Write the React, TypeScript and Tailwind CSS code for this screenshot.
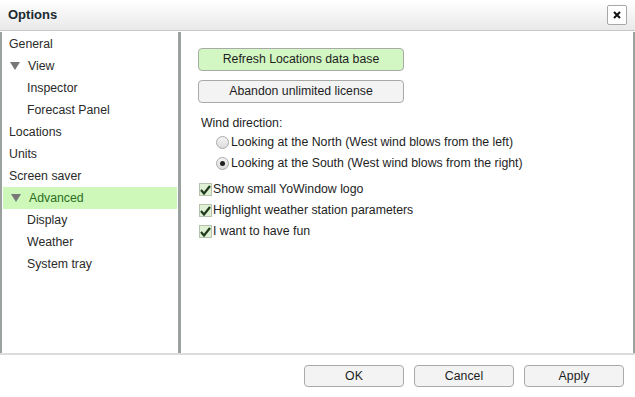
import { useState } from "react";

type Node = { label: string; depth: 0 | 1; arrow?: boolean };

const TREE: Node[] = [
  { label: "General", depth: 0 },
  { label: "View", depth: 0, arrow: true },
  { label: "Inspector", depth: 1 },
  { label: "Forecast Panel", depth: 1 },
  { label: "Locations", depth: 0 },
  { label: "Units", depth: 0 },
  { label: "Screen saver", depth: 0 },
  { label: "Advanced", depth: 0, arrow: true },
  { label: "Display", depth: 1 },
  { label: "Weather", depth: 1 },
  { label: "System tray", depth: 1 },
];

export default function App() {
  const [selected, setSelected] = useState("Advanced");
  const [south, setSouth] = useState(true);
  const [checks, setChecks] = useState([true, true, true]);

  const checkLabels = ["Show small YoWindow logo", "Highlight weather station parameters", "I want to have fun"];

  return (
    <div
      className="flex h-[397px] w-[635px] flex-col bg-white text-[12.3px] text-[#1e1e1e]"
      style={{ fontFamily: '"Liberation Sans", Arial, sans-serif' }}
    >
      <div className="flex h-[31px] shrink-0 items-center justify-between border-b border-[#c8c8c8] bg-gradient-to-b from-white to-[#e9e9e9] pl-2 pr-[8px]">
        <span className="text-[13px] font-bold text-[#1a2a30]">Options</span>
        <button className="flex h-[20px] w-[20px] items-center justify-center rounded-[2px] border border-[#a8a8a8] bg-white">
          <svg width="8" height="8" viewBox="0 0 8 8">
            <path d="M1 1L7 7M7 1L1 7" stroke="#111" strokeWidth="2" />
          </svg>
        </button>
      </div>

      <div className="flex h-[324px] shrink-0 border-b-2 border-[#dcdcdc] pt-[1px]">
        <div className="w-[181px] shrink-0 border-l-2 border-r-[3px] border-[#9aa19e] pt-[1px]">
          {TREE.map((n) => {
            const active = selected === n.label;
            return (
              <div
                key={n.label}
                onClick={() => setSelected(n.label)}
                className={[
                  "flex h-[22px] cursor-default items-center",
                  active ? "mx-[1px] bg-[#cdf8b9] text-[#2c6e1e]" : "text-[#2a2a2a]",
                  n.depth === 1 ? "pl-[25px]" : n.arrow ? "pl-[8px]" : "pl-[7px]",
                ].join(" ")}
              >
                {n.arrow ? (
                  <svg width="10" height="8" viewBox="0 0 10 8" className="mr-[8px]">
                    <path d="M0 0H10L5 8Z" fill="#777" />
                  </svg>
                ) : null}
                {n.label}
              </div>
            );
          })}
        </div>

        <div className="flex-1 border-r-2 border-[#9aa19e] pl-[17px] pt-[16px]">
          <button className="block h-[23px] w-[206px] rounded-[4px] border border-[#a8aaa8] bg-[#d3f7c3] text-[12.3px]">
            Refresh Locations data base
          </button>
          <button className="mt-[9px] block h-[23px] w-[206px] rounded-[4px] border border-[#a8aaa8] bg-[#f3f3f3] text-[12.3px]">
            Abandon unlimited license
          </button>

          <div className="mt-[11px] h-[18px] pl-[3px] leading-[18px]">Wind direction:</div>
          {[false, true].map((isSouth) => (
            <label key={String(isSouth)} className="flex h-[21px] items-center pl-[18px]" onClick={() => setSouth(isSouth)}>
              <span className="mr-[2px] flex h-[13px] w-[13px] items-center justify-center rounded-full border border-[#a9a9a9] bg-gradient-to-b from-[#f4f4f4] to-[#dcdcdc]">
                {south === isSouth ? <span className="h-[5px] w-[5px] rounded-full bg-[#222]" /> : null}
              </span>
              {isSouth
                ? "Looking at the South (West wind blows from the right)"
                : "Looking at the North (West wind blows from the left)"}
            </label>
          ))}

          <div className="mt-[5px]">
            {checkLabels.map((label, i) => (
              <label
                key={label}
                className="flex h-[21px] items-center pl-[1px]"
                onClick={() => setChecks((p) => p.map((c, j) => (j === i ? !c : c)))}
              >
                <span className="mr-[1px] flex h-[13px] w-[13px] items-center justify-center border border-[#b5c3ae] bg-[#dff0d4]">
                  {checks[i] ? (
                    <svg width="11" height="10" viewBox="0 0 11 10">
                      <path d="M1 5L4 8.5L10 1" stroke="#1f3a1a" strokeWidth="2.2" fill="none" />
                    </svg>
                  ) : null}
                </span>
                {label}
              </label>
            ))}
          </div>
        </div>
      </div>

      <div className="flex flex-1 items-start justify-end gap-[10px] pr-[11px] pt-[10px]">
        {["OK", "Cancel", "Apply"].map((b) => (
          <button key={b} className="h-[22px] w-[100px] rounded-[4px] border border-[#a8aaa8] bg-[#f3f3f3] text-[12.3px]">
            {b}
          </button>
        ))}
      </div>
    </div>
  );
}
